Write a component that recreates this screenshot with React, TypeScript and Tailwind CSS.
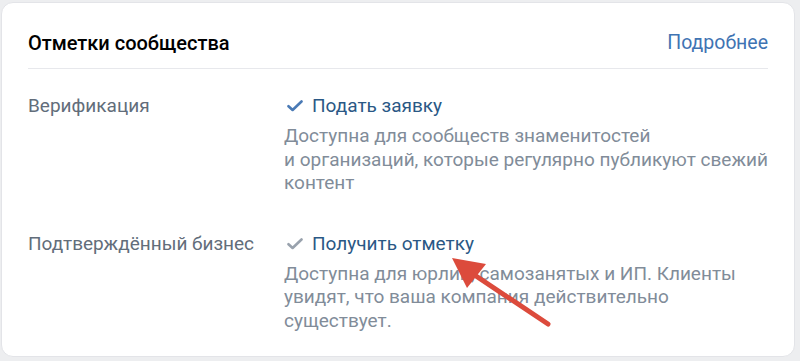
import React from "react";

function Check({ color }: { color: string }) {
  return (
    <svg width="16" height="12" viewBox="0 0 16 12" className="shrink-0">
      <path d="M1.5 6.2 L5.6 10 L14.5 1.5" fill="none" stroke={color} strokeWidth="2.6" strokeLinecap="round" strokeLinejoin="round" />
    </svg>
  );
}

function Row({
  label,
  action,
  checkColor,
  lines,
  className,
}: {
  label: string;
  action: string;
  checkColor: string;
  lines: string[];
  className?: string;
}) {
  return (
    <div className={"flex " + (className ?? "")}>
      <div className="w-[256px] shrink-0 text-[19px] leading-[24px] text-[#626d7a]">{label}</div>
      <div className="flex flex-col">
        <div className="flex items-center h-[24px]">
          <div className="w-[28px] flex justify-start pl-[3px]">
            <Check color={checkColor} />
          </div>
          <span className="text-[19px] leading-[24px] text-[#2a5885]">{action}</span>
        </div>
        <div className="mt-[6px] text-[19px] leading-[23.5px] text-[#818c99]">
          {lines.map((l, i) => (
            <div key={i} className="whitespace-nowrap">{l}</div>
          ))}
        </div>
      </div>
    </div>
  );
}

export default function App() {
  return (
    <div className="w-[800px] h-[361px] bg-[#edeef0] pt-[2px] pl-[1px] overflow-hidden relative" style={{ fontFamily: "Roboto, 'Noto Sans', sans-serif" }}>
      <div className="w-[794px] h-[355px] bg-white rounded-[12px] border border-[#e3e4e8] px-[26px]">
        <div className="flex items-center justify-between pt-[28px] pb-[13px]">
          <div className="text-[20px] leading-[24px] font-medium text-black">Отметки сообщества</div>
          <a className="text-[19.5px] leading-[24px] text-[#3f74b3]">Подробнее</a>
        </div>
        <div className="h-px bg-[#e7e8ec]" />
        <Row
          className="mt-[25px]"
          label="Верификация"
          action="Подать заявку"
          checkColor="#4a7ab5"
          lines={[
            "Доступна для сообществ знаменитостей",
            "и организаций, которые регулярно публикуют свежий",
            "контент",
          ]}
        />
        <Row
          className="mt-[37px]"
          label="Подтверждённый бизнес"
          action="Получить отметку"
          checkColor="#99a2ad"
          lines={[
            "Доступна для юрлиц, самозанятых и ИП. Клиенты",
            "увидят, что ваша компания действительно",
            "существует.",
          ]}
        />
      </div>
      <svg className="absolute left-0 top-0 pointer-events-none" width="800" height="361" viewBox="0 0 800 361">
        <line x1="548" y1="324" x2="470" y2="272" stroke="#dc4b3c" strokeWidth="5" strokeLinecap="round" />
        <polygon points="452,258 486,264 467,288" fill="#dc4b3c" />
      </svg>
    </div>
  );
}
